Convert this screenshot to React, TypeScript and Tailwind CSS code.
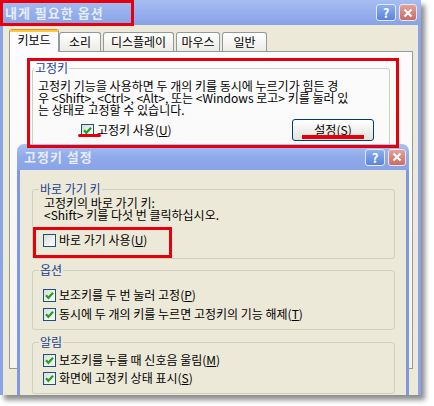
import React from "react";

const font = "font-['Noto_Sans_CJK_KR','Noto_Sans',sans-serif]";

const Key = ({ k }: { k: string }) => (
  <>
    (<span className="underline underline-offset-[1px]">{k}</span>)
  </>
);

const CheckBox = ({ checked }: { checked?: boolean }) => (
  <span className="flex h-[13px] w-[13px] shrink-0 items-center justify-center border border-[#1c5180] bg-gradient-to-br from-[#dcdcd7] to-white">
    {checked && (
      <svg width="9" height="9" viewBox="0 0 9 9">
        <path d="M1 4.2 L3.4 6.8 L8 1.8" fill="none" stroke="#21a121" strokeWidth="2.2" />
      </svg>
    )}
  </span>
);

const CheckRow = ({ checked, children }: { checked?: boolean; children: React.ReactNode }) => (
  <div className="flex h-[16px] items-center gap-[3px] whitespace-nowrap">
    <CheckBox checked={checked} />
    <span>{children}</span>
  </div>
);

const TitleButtons = () => (
  <div className="flex gap-[3px]">
    <div className="flex h-[17px] w-[20px] items-center justify-center rounded-[3px] border border-[#e2eafb] bg-gradient-to-b from-[#8db0f2] to-[#5a83dc] text-[13px] font-bold leading-none text-white">
      ?
    </div>
    <div className="flex h-[17px] w-[18px] items-center justify-center rounded-[3px] border border-[#f0e4e8] bg-gradient-to-b from-[#e2a39d] to-[#c66d65]">
      <svg width="10" height="10" viewBox="0 0 10 10">
        <path d="M1.5 1.5 L8.5 8.5 M8.5 1.5 L1.5 8.5" stroke="white" strokeWidth="2" />
      </svg>
    </div>
  </div>
);

const Tab = ({ label, w, selected }: { label: string; w: string; selected?: boolean }) =>
  selected ? (
    <div
      className={`relative z-10 -mb-px flex h-[23px] ${w} items-center justify-center rounded-t-[3px] border border-b-0 border-[#919b9c] border-t-[#e68b2c] bg-[#fcfcfe] pb-[2px]`}
    >
      <div className="absolute inset-x-0 top-0 h-[2px] bg-[#ffc83c]" />
      {label}
    </div>
  ) : (
    <div
      className={`flex h-[19px] ${w} items-center justify-center rounded-t-[3px] border border-b-0 border-[#919b9c] bg-gradient-to-b from-white to-[#ecebe5]`}
    >
      {label}
    </div>
  );

const Red = ({ className }: { className: string }) => (
  <div className={`pointer-events-none absolute border-[3px] border-[#e5000e] ${className}`} />
);

export default function App() {
  return (
    <div className={`min-h-screen bg-white text-[12px] leading-[12px] text-black ${font}`}>
      <div className="relative h-[395px] w-[421px] overflow-hidden shadow-[4px_5px_5px_rgba(0,0,0,0.45)]">
        {/* main window */}
        <div className="flex h-full flex-col">
          <div className="flex h-[25px] shrink-0 items-center justify-between bg-gradient-to-b from-[#a6bdf2] to-[#87a2e7] pl-[5px] pr-[4px]">
            <span className="text-[13px] font-bold tracking-[1px] text-[#e6edfb]">내게 필요한 옵션</span>
            <TitleButtons />
          </div>
          <div className="flex flex-1 flex-col border-x-[3px] border-[#8aa4e6] bg-[#ece9d8] pl-[6px] pr-[5px] pt-[4px]">
            <div className="flex items-end">
              <Tab label="키보드" w="w-[50px]" selected />
              <Tab label="소리" w="w-[42px]" />
              <div className="w-[2px]" />
              <Tab label="디스플레이" w="w-[71px]" />
              <div className="w-[2px]" />
              <Tab label="마우스" w="w-[44px]" />
              <div className="w-[2px]" />
              <Tab label="일반" w="w-[45px]" />
            </div>
            <div className="h-[318px] border border-[#919b9c] bg-gradient-to-b from-[#fcfcfe] to-[#f4f3ee] px-[22px] pt-[10px]">
              <fieldset className="rounded-[3px] border border-[#d0d0bf] pb-[4px]">
                <legend className="ml-[1px] px-[1px] text-[#23408e]">고정키</legend>
                <p className="mt-[6px] whitespace-nowrap pl-[5px]">
                  고정키 기능을 사용하면 두 개의 키를 동시에 누르기가 힘든 경
                  <br />
                  우 &lt;Shift&gt;, &lt;Ctrl&gt;, &lt;Alt&gt;, 또는 &lt;Windows 로고&gt; 키를 눌러 있
                  <br />는 상태로 고정할 수 있습니다.
                </p>
                <div className="mt-[3px] flex items-center justify-between pl-[48px] pr-[15px]">
                  <CheckRow checked>
                    고정키 사용<Key k="U" />
                  </CheckRow>
                  <div className="flex h-[22px] w-[82px] items-center justify-center rounded-[3px] border border-[#003c74] bg-gradient-to-b from-white to-[#e3e2da]">
                    설정<Key k="S" />
                  </div>
                </div>
              </fieldset>
            </div>
          </div>
        </div>

        {/* settings window */}
        <div className="absolute left-[17px] top-[144px] flex h-[270px] w-[392px] flex-col">
          <div className="flex h-[26px] shrink-0 items-center justify-between rounded-t-[7px] bg-gradient-to-b from-[#abc1f3] via-[#8fa9ea] to-[#89a3e7] pl-[7px] pr-[3px]">
            <span className="text-[13px] font-bold tracking-[1px] text-[#e6edfb]">고정키 설정</span>
            <TitleButtons />
          </div>
          <div className="flex-1 border-x-[3px] border-[#7f98e0] bg-[#ece9d8] pl-[12px] pr-[11px] pt-[13px]">
            <fieldset className="rounded-[3px] border border-[#d0d0bf] pb-[10px]">
              <legend className="ml-[6px] px-[1px] text-[#23408e]">바로 가기 키</legend>
              <p className="mt-[2px] whitespace-nowrap pl-[11px]">
                고정키의 바로 가기 키:
                <br />
                &lt;Shift&gt; 키를 다섯 번 클릭하십시오.
              </p>
              <div className="mt-[11px] pl-[10px]">
                <CheckRow>
                  바로 가기 사용<Key k="U" />
                </CheckRow>
              </div>
            </fieldset>

            <fieldset className="mt-[5px] rounded-[3px] border border-[#d0d0bf] pb-[7px]">
              <legend className="ml-[6px] px-[1px] text-[#23408e]">옵션</legend>
              <div className="mt-[11px] flex flex-col gap-[3px] pl-[10px]">
                <CheckRow checked>
                  보조키를 두 번 눌러 고정<Key k="P" />
                </CheckRow>
                <CheckRow checked>
                  동시에 두 개의 키를 누르면 고정키의 기능 해제<Key k="T" />
                </CheckRow>
              </div>
            </fieldset>

            <fieldset className="mt-[6px] rounded-[3px] border border-[#d0d0bf] pb-[7px]">
              <legend className="ml-[6px] px-[1px] text-[#23408e]">알림</legend>
              <div className="mt-[4px] flex flex-col gap-[2px] pl-[10px]">
                <CheckRow checked>
                  보조키를 누를 때 신호음 울림<Key k="M" />
                </CheckRow>
                <CheckRow checked>
                  화면에 고정키 상태 표시<Key k="S" />
                </CheckRow>
              </div>
            </fieldset>
          </div>
        </div>

        {/* annotations */}
        <Red className="left-0 top-0 h-[26px] w-[134px]" />
        <Red className="left-[27px] top-[58px] h-[90px] w-[372px]" />
        <Red className="left-[33px] top-[227px] h-[31px] w-[139px]" />
        <div className="absolute left-[78px] top-[134px] h-[3px] w-[23px] rounded-full bg-[#e5000e]" />
        <div className="absolute left-[302px] top-[135px] h-[4px] w-[62px] bg-[#e5000e]" />
      </div>
    </div>
  );
}
